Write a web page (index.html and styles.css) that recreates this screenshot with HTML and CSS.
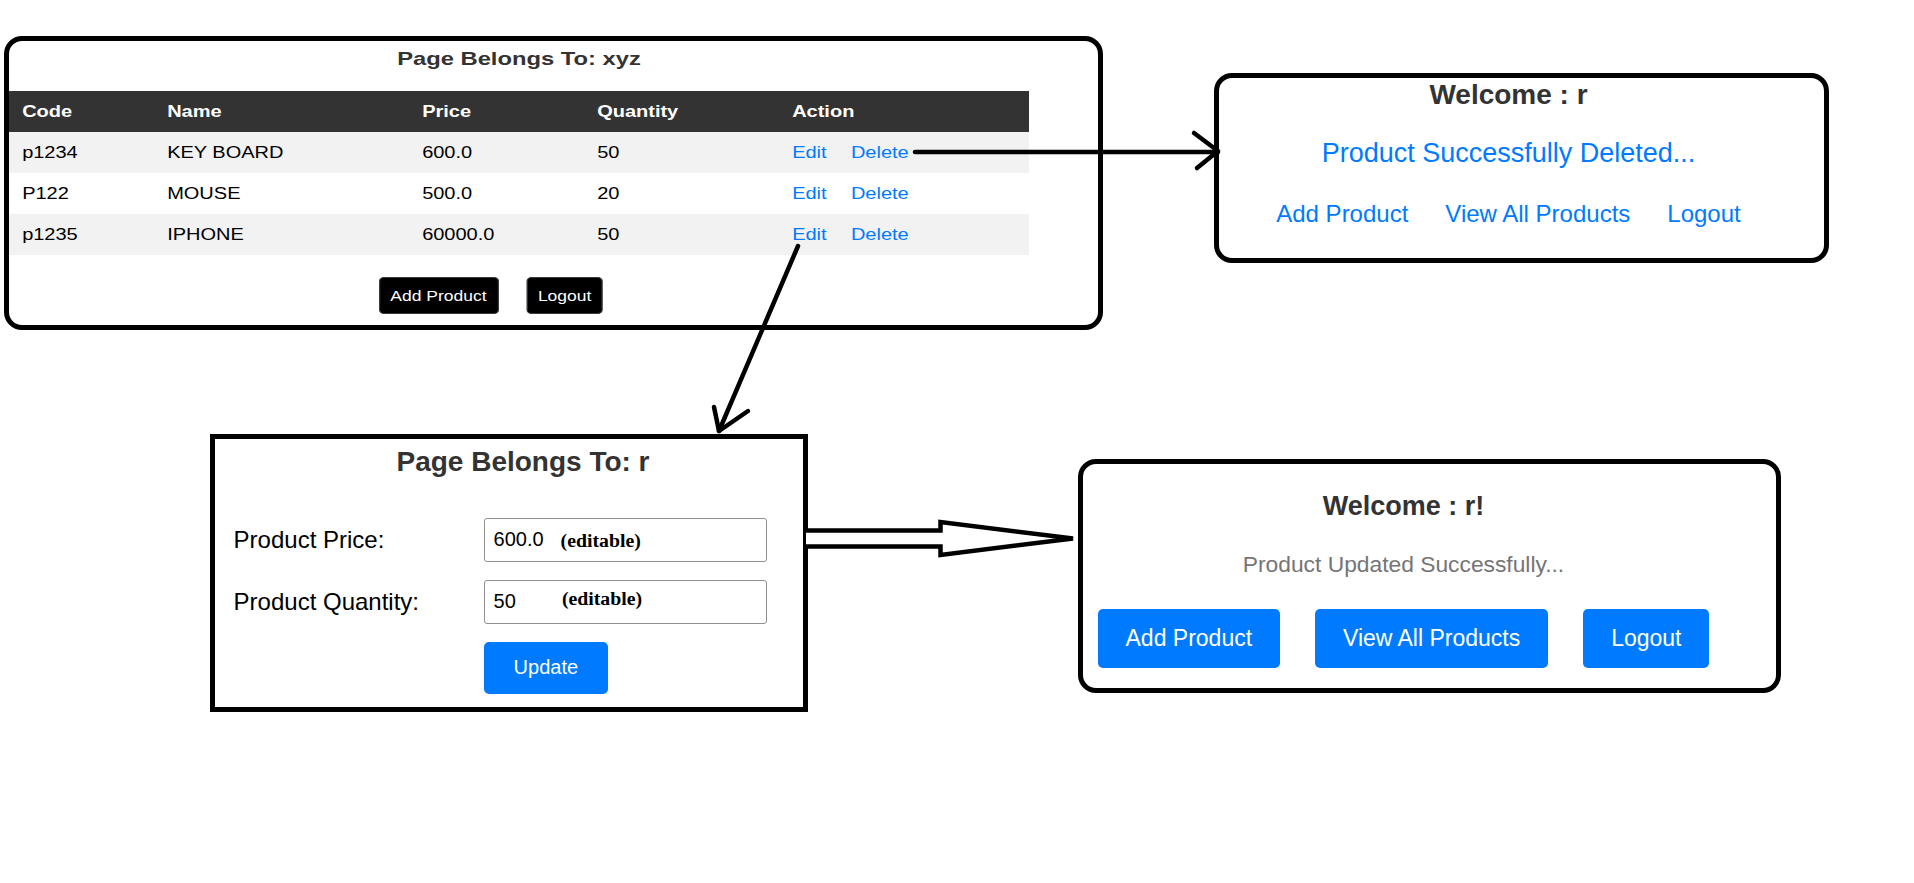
FILE: index.html
```html
<!DOCTYPE html>
<html lang="en">
<head>
    <meta charset="UTF-8">
    <meta name="viewport" content="width=device-width, initial-scale=1.0">
    <title>Product Management - Flujo</title>
    <link rel="stylesheet" href="styles.css">
</head>
<body>
    <div class="canvas">

        <!-- Lista de productos -->
        <div class="win win-products">
            <div class="products-inner">
                <h2 class="products-title">Page Belongs To: xyz</h2>
                <table class="product-table">
                    <colgroup>
                        <col class="col-code">
                        <col class="col-name">
                        <col class="col-price">
                        <col class="col-qty">
                        <col class="col-action">
                    </colgroup>
                    <thead>
                        <tr>
                            <th>Code</th>
                            <th>Name</th>
                            <th>Price</th>
                            <th>Quantity</th>
                            <th>Action</th>
                        </tr>
                    </thead>
                    <tbody>
                        <tr>
                            <td>p1234</td>
                            <td>KEY BOARD</td>
                            <td>600.0</td>
                            <td>50</td>
                            <td><a href="#" class="edit-link">Edit</a> <a href="#">Delete</a></td>
                        </tr>
                        <tr>
                            <td>P122</td>
                            <td>MOUSE</td>
                            <td>500.0</td>
                            <td>20</td>
                            <td><a href="#" class="edit-link">Edit</a> <a href="#">Delete</a></td>
                        </tr>
                        <tr>
                            <td>p1235</td>
                            <td>IPHONE</td>
                            <td>60000.0</td>
                            <td>50</td>
                            <td><a href="#" class="edit-link">Edit</a> <a href="#">Delete</a></td>
                        </tr>
                    </tbody>
                </table>
                <div class="products-actions">
                    <button class="btn-dark">Add Product</button>
                    <button class="btn-dark">Logout</button>
                </div>
            </div>
        </div>

        <!-- Resultado de borrar -->
        <div class="win win-deleted">
            <h2 class="welcome">Welcome : r</h2>
            <p class="msg-deleted">Product Successfully Deleted...</p>
            <div class="link-row">
                <a href="#">Add Product</a>
                <a href="#">View All Products</a>
                <a href="#">Logout</a>
            </div>
        </div>

        <!-- Formulario de edicion -->
        <div class="win win-edit">
            <h2 class="edit-title">Page Belongs To: r</h2>
            <form class="edit-form">
                <label for="price">Product Price:</label>
                <div class="field">
                    <input id="price" type="text" value="600.0">
                    <b class="note note-price">(editable)</b>
                </div>
                <label for="qty">Product Quantity:</label>
                <div class="field">
                    <input id="qty" type="text" value="50">
                    <b class="note note-qty">(editable)</b>
                </div>
                <div class="field-btn">
                    <button type="button" class="btn-blue btn-update">Update</button>
                </div>
            </form>
        </div>

        <!-- Resultado de actualizar -->
        <div class="win win-updated">
            <h2 class="welcome-2">Welcome : r!</h2>
            <p class="msg-updated">Product Updated Successfully...</p>
            <div class="btn-row">
                <button class="btn-blue">Add Product</button>
                <button class="btn-blue">View All Products</button>
                <button class="btn-blue">Logout</button>
            </div>
        </div>

        <!-- Flechas -->
        <svg class="arrows" width="1914" height="883" viewBox="0 0 1914 883">
            <g fill="none" stroke="#000" stroke-width="4.5" stroke-linecap="round" stroke-linejoin="round">
                <line x1="915" y1="152" x2="1218" y2="152"/>
                <polyline points="1194,133 1218,151 1197,168"/>
                <line x1="798" y1="246" x2="719" y2="431"/>
                <polyline points="714,407 719,431 748,411"/>
                <polyline fill="#fff" stroke-linejoin="miter" points="806,530.5 940.5,530.5 940.5,522 1073,538.5 940.5,555 940.5,546.5 806,546.5"/>
            </g>
        </svg>
    </div>
</body>
</html>
```

FILE: styles.css
```css
* {
    box-sizing: border-box;
}

body {
    margin: 0;
    background-color: #fff;
    font-family: "Liberation Sans", Arial, sans-serif;
}

.canvas {
    position: relative;
    width: 1914px;
    height: 883px;
    overflow: hidden;
}

h2, p {
    margin: 0;
}

a {
    color: #007bff;
    text-decoration: none;
}

button {
    font-family: inherit;
    cursor: pointer;
}

/* ventanas sobre el lienzo */
.win {
    position: absolute;
    border: 5px solid #000;
    background-color: #fff;
}

/* --- lista de productos --- */
.win-products {
    left: 4px;
    top: 36px;
    width: 1099px;
    height: 294px;
    border-radius: 18px;
}

.products-inner {
    width: 816px;
    transform: scaleX(1.25);
    transform-origin: 0 0;
}

.products-title {
    margin-top: 7px;
    font-size: 19px;
    line-height: 22px;
    color: #333;
    text-align: center;
}

.product-table {
    margin-top: 21px;
    width: 816px;
    border-collapse: collapse;
    table-layout: fixed;
    font-size: 16px;
}

.col-code { width: 116px; }
.col-name { width: 204px; }
.col-price { width: 140px; }
.col-qty { width: 156px; }
.col-action { width: 200px; }

.product-table th,
.product-table td {
    height: 41px;
    padding: 0 10.5px;
    text-align: left;
    white-space: nowrap;
}

.product-table th {
    background-color: #333;
    color: #fff;
}

.product-table td {
    color: #000;
}

.product-table tbody tr:nth-child(odd) {
    background-color: #f2f2f2;
}

.edit-link {
    margin-right: 15px;
}

.products-actions {
    display: flex;
    justify-content: center;
    gap: 22px;
    margin-top: 22px;
    padding-right: 45px;
}

.btn-dark {
    height: 37px;
    padding: 0 8.5px;
    font-size: 14px;
    color: #fff;
    background-color: #000;
    border: 1px solid #3a3a3a;
    border-radius: 4px;
}

/* --- producto borrado --- */
.win-deleted {
    left: 1214px;
    top: 73px;
    width: 615px;
    height: 190px;
    border-radius: 18px;
    padding: 0.8px 26px 0 0;
    text-align: center;
}

.welcome {
    font-size: 28px;
    line-height: 32px;
    color: #333;
}

.msg-deleted {
    margin-top: 27.5px;
    font-size: 27px;
    line-height: 31px;
    color: #007bff;
}

.link-row {
    display: flex;
    justify-content: center;
    gap: 37px;
    margin-top: 30.3px;
    font-size: 24px;
    line-height: 27px;
}

/* --- formulario de edicion --- */
.win-edit {
    left: 210px;
    top: 434px;
    width: 598px;
    height: 278px;
    padding-top: 7.4px;
}

.edit-title {
    padding-left: 28px;
    font-size: 28px;
    line-height: 32px;
    color: #333;
    text-align: center;
}

.edit-form {
    display: grid;
    grid-template-columns: 250px 283px;
    row-gap: 18px;
    align-items: center;
    margin-top: 39.6px;
    padding-left: 18.6px;
}

.edit-form label {
    font-size: 24px;
    line-height: 27px;
    color: #000;
}

.field {
    position: relative;
}

.field input {
    display: block;
    width: 283px;
    height: 44px;
    padding: 0 9px;
    font-family: inherit;
    font-size: 20px;
    color: #000;
    border: 1px solid #8f8f8f;
    border-radius: 3px;
}

.note {
    position: absolute;
    left: 77px;
    font-family: "Liberation Serif", "Times New Roman", serif;
    font-size: 19.8px;
    line-height: 20px;
    color: #000;
}

.note-price {
    top: 12px;
}

.note-qty {
    top: 7.7px;
    left: 78.3px;
}

.field-btn {
    grid-column: 2;
}

.btn-blue {
    font-size: 23px;
    line-height: 25px;
    padding: 16.8px 27.7px;
    color: #fff;
    background-color: #007bff;
    border: none;
    border-radius: 5px;
}

.btn-update {
    font-size: 20px;
    line-height: 23px;
    padding: 14.5px 30px;
}

/* --- producto actualizado --- */
.win-updated {
    left: 1078px;
    top: 459px;
    width: 703px;
    height: 234px;
    border-radius: 18px;
    padding: 26.6px 52px 0 0;
    text-align: center;
}

.welcome-2 {
    font-size: 27px;
    line-height: 31px;
    color: #333;
}

.msg-updated {
    margin-top: 29.6px;
    font-size: 22.8px;
    line-height: 26px;
    color: #757575;
}

.btn-row {
    display: flex;
    justify-content: center;
    gap: 35.5px;
    margin-top: 31.8px;
}

/* flechas encima de todo */
.arrows {
    position: absolute;
    left: 0;
    top: 0;
    pointer-events: none;
}
```
